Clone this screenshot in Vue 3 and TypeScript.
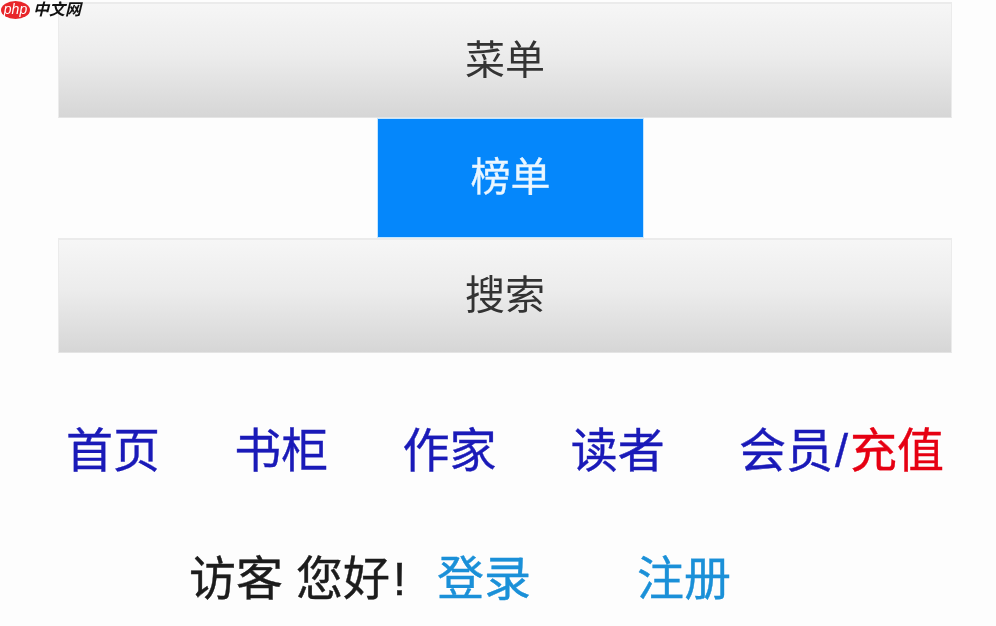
<script setup lang="ts">
const menu = [
  { label: '菜单', active: false },
  { label: '榜单', active: true },
  { label: '搜索', active: false },
]
const links = ['首页', '书柜', '作家', '读者']
</script>

<template>
  <div class="page">
    <div class="logo">
      <span class="php">php</span>
      <span class="cn">中文网</span>
    </div>
    <div class="menu">
      <div v-for="m in menu" :key="m.label" class="item" :class="{ active: m.active }">{{ m.label }}</div>
    </div>
    <nav class="nav">
      <a v-for="l in links" :key="l">{{ l }}</a>
      <a>会员<span class="slash">/</span><span class="red">充值</span></a>
    </nav>
    <div class="user">
      <span class="hello">访客 您好<span class="bang">!</span></span>
      <a class="login">登录</a>
      <a class="reg">注册</a>
    </div>
  </div>
</template>

<style>
html, body { margin: 0; background: #fdfdfd; }
</style>

<style scoped>
.page {
  position: relative;
  width: 996px;
  height: 626px;
  overflow: hidden;
  background: #fdfdfd;
  font-family: "Liberation Sans", "Noto Sans CJK SC", sans-serif;
  box-sizing: border-box;
  padding: 2px 44px 0 58px;
  filter: blur(0.45px);
}
.logo {
  position: absolute;
  left: 1px;
  top: 1px;
  display: flex;
  align-items: center;
  gap: 3px;
  height: 18px;
}
.php {
  width: 29px;
  height: 18px;
  border-radius: 50%;
  background: #e8262a;
  color: #fff;
  font: italic 14px/16px "Liberation Sans", sans-serif;
  text-align: center;
}
.cn {
  font-size: 16px;
  line-height: 18px;
  color: #111;
  font-style: italic;
  font-weight: 700;
}
.menu {
  display: flex;
  flex-direction: column;
  align-items: center;
}
.item {
  width: 100%;
  height: 116px;
  box-sizing: border-box;
  border: 1px solid #ebebeb;
  border-top-width: 2px;
  border-bottom-color: #e4e4e4;
  background: linear-gradient(#f6f6f6 0%, #ececec 45%, #d6d6d6 100%);
  color: #333;
  font-size: 40px;
  line-height: 113px;
  text-align: center;
}
.item:nth-child(3) { margin-top: 1px; height: 115px; line-height: 110px; }
.item.active {
  width: 265px;
  height: 118px;
  margin: 1px 0 0 11px;
  border: 0;
  background: #0587fb;
  color: #eaf6ff;
  line-height: 116px;
  box-shadow: 0 0 0 1px #c4e6ff;
  -webkit-text-stroke: 0.3px #eaf6ff;
}
.nav {
  display: flex;
  justify-content: space-between;
  margin: 68px 8px 0 8px;
  font-size: 47px;
  line-height: 60px;
  color: #1a1ab8;
  -webkit-text-stroke: 0.4px #1a1ab8;
}
.slash { margin: 0 2px; }
.red { color: #e60012; -webkit-text-stroke: 0.4px #e60012; }
.user {
  display: flex;
  margin: 68px 0 0 131px;
  font-size: 47px;
  line-height: 60px;
}
.hello {
  color: #1c1c1c;
  width: 248px;
  white-space: nowrap;
  -webkit-text-stroke: 0.4px #1c1c1c;
}
.bang { margin-left: 3px; }
.login, .reg { color: #1a90d8; -webkit-text-stroke: 0.4px #1a90d8; }
.login { width: 200px; }
</style>
